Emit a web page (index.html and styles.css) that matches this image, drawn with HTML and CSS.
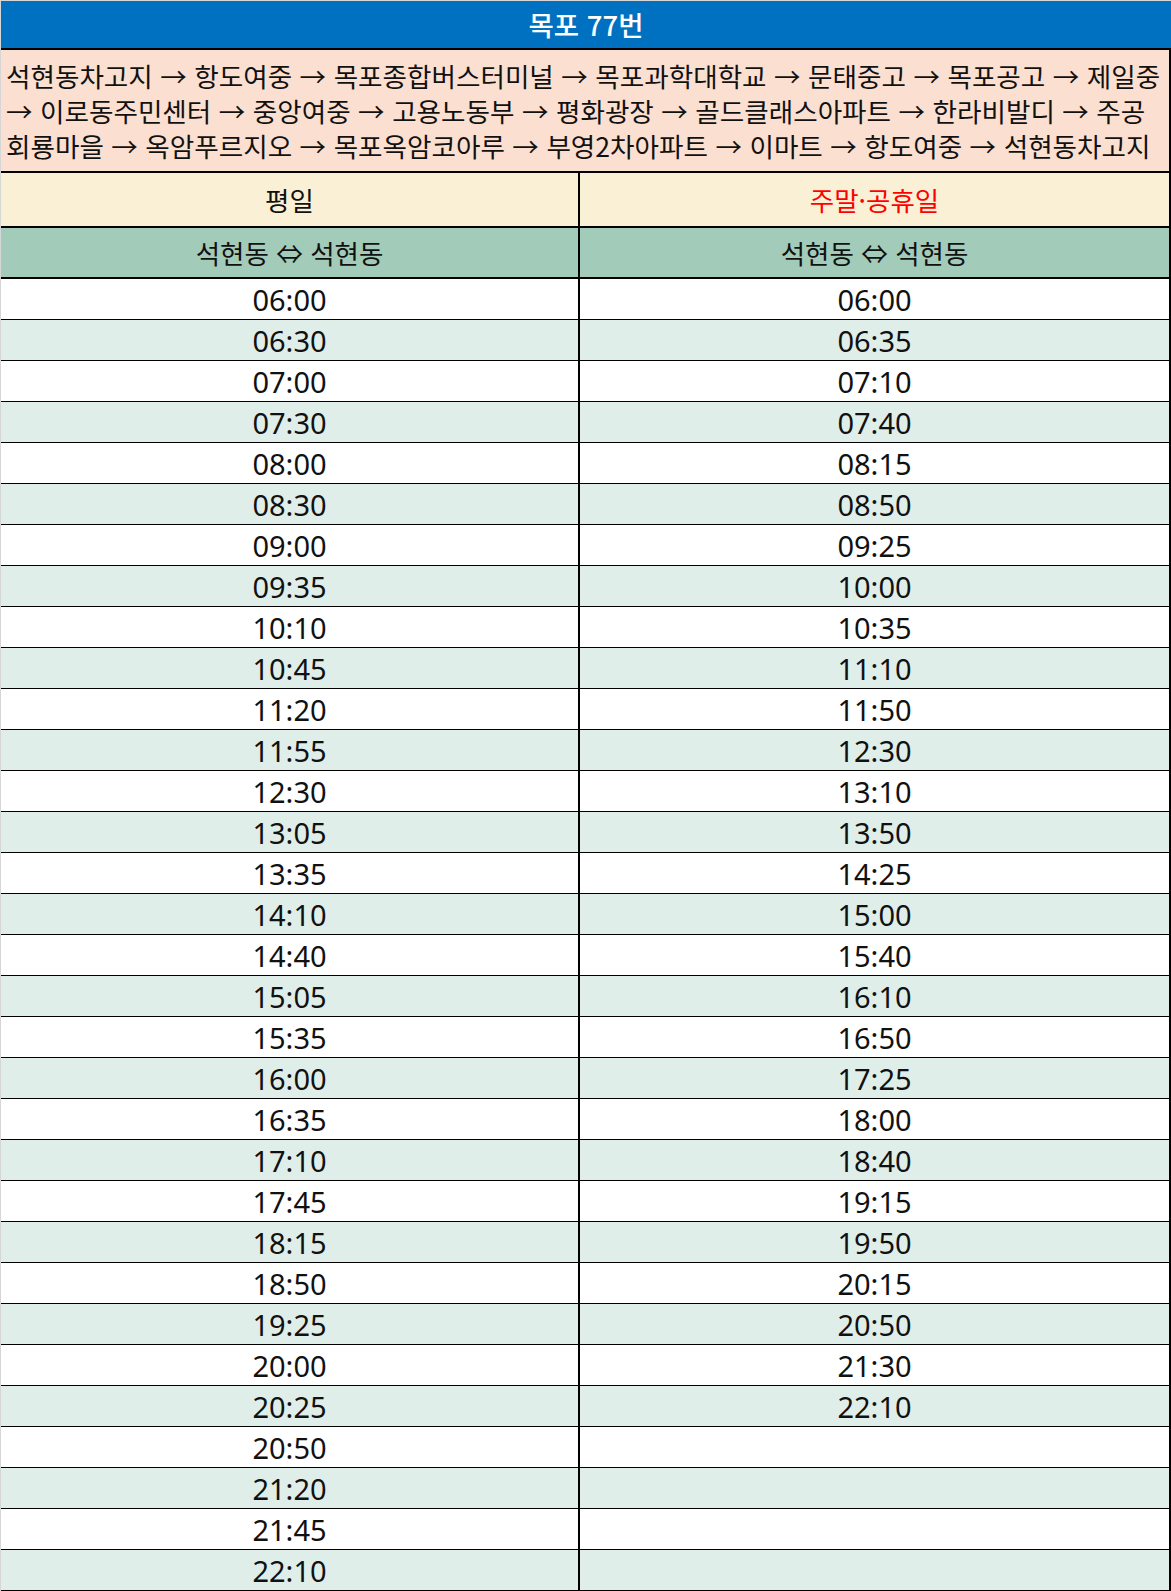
FILE: index.html
```html
<!DOCTYPE html>
<html lang="ko">
<head>
<meta charset="utf-8">
<title>목포 77번</title>
<link rel="stylesheet" href="styles.css">
</head>
<body>
<div class="sheet">
  <div class="title">목포 77번</div>
  <div class="route">석현동차고지 → 항도여중 → 목포종합버스터미널 → 목포과학대학교 → 문태중고 → 목포공고 → 제일중<br>→ 이로동주민센터 → 중앙여중 → 고용노동부 → 평화광장 → 골드클래스아파트 → 한라비발디 → 주공<br>회룡마을 → 옥암푸르지오 → 목포옥암코아루 → 부영2차아파트 → 이마트 → 항도여중 → 석현동차고지</div>
  <div class="row head">
    <div class="cell">평일</div>
    <div class="cell right red">주말·공휴일</div>
  </div>
  <div class="row sub">
    <div class="cell">석현동 ⇔ 석현동</div>
    <div class="cell right">석현동 ⇔ 석현동</div>
  </div>
  <div class="body">
    <div class="row"><div class="cell">06:00</div><div class="cell right">06:00</div></div>
    <div class="row"><div class="cell">06:30</div><div class="cell right">06:35</div></div>
    <div class="row"><div class="cell">07:00</div><div class="cell right">07:10</div></div>
    <div class="row"><div class="cell">07:30</div><div class="cell right">07:40</div></div>
    <div class="row"><div class="cell">08:00</div><div class="cell right">08:15</div></div>
    <div class="row"><div class="cell">08:30</div><div class="cell right">08:50</div></div>
    <div class="row"><div class="cell">09:00</div><div class="cell right">09:25</div></div>
    <div class="row"><div class="cell">09:35</div><div class="cell right">10:00</div></div>
    <div class="row"><div class="cell">10:10</div><div class="cell right">10:35</div></div>
    <div class="row"><div class="cell">10:45</div><div class="cell right">11:10</div></div>
    <div class="row"><div class="cell">11:20</div><div class="cell right">11:50</div></div>
    <div class="row"><div class="cell">11:55</div><div class="cell right">12:30</div></div>
    <div class="row"><div class="cell">12:30</div><div class="cell right">13:10</div></div>
    <div class="row"><div class="cell">13:05</div><div class="cell right">13:50</div></div>
    <div class="row"><div class="cell">13:35</div><div class="cell right">14:25</div></div>
    <div class="row"><div class="cell">14:10</div><div class="cell right">15:00</div></div>
    <div class="row"><div class="cell">14:40</div><div class="cell right">15:40</div></div>
    <div class="row"><div class="cell">15:05</div><div class="cell right">16:10</div></div>
    <div class="row"><div class="cell">15:35</div><div class="cell right">16:50</div></div>
    <div class="row"><div class="cell">16:00</div><div class="cell right">17:25</div></div>
    <div class="row"><div class="cell">16:35</div><div class="cell right">18:00</div></div>
    <div class="row"><div class="cell">17:10</div><div class="cell right">18:40</div></div>
    <div class="row"><div class="cell">17:45</div><div class="cell right">19:15</div></div>
    <div class="row"><div class="cell">18:15</div><div class="cell right">19:50</div></div>
    <div class="row"><div class="cell">18:50</div><div class="cell right">20:15</div></div>
    <div class="row"><div class="cell">19:25</div><div class="cell right">20:50</div></div>
    <div class="row"><div class="cell">20:00</div><div class="cell right">21:30</div></div>
    <div class="row"><div class="cell">20:25</div><div class="cell right">22:10</div></div>
    <div class="row"><div class="cell">20:50</div><div class="cell right"></div></div>
    <div class="row"><div class="cell">21:20</div><div class="cell right"></div></div>
    <div class="row"><div class="cell">21:45</div><div class="cell right"></div></div>
    <div class="row"><div class="cell">22:10</div><div class="cell right"></div></div>
  </div>
</div>
</body>
</html>
```
FILE: styles.css
```css
html, body {
  margin: 0;
  padding: 0;
}
body {
  background: #d6d6d6;
  font-family: "Noto Sans CJK KR", "Noto Sans", sans-serif;
  color: #111;
}
.sheet {
  margin: 1px 0 0 1px;
  width: 1170px;
}
.title {
  height: 47px;
  background: #0070c0;
  color: #fff;
  border-bottom: 2px solid #000;
  font-size: 27.5px;
  font-weight: 500;
  line-height: 47px;
  text-align: center;
}
.route {
  box-sizing: border-box;
  height: 123px;
  background: #fbdfd0;
  border-right: 2px solid #000;
  border-bottom: 2px solid #000;
  padding: 8px 0 0 5px;
  font-size: 26.6px;
  line-height: 35px;
  white-space: nowrap;
  overflow: hidden;
}
.row {
  display: grid;
  grid-template-columns: 577px 593px;
  height: 41px;
  border-bottom: 1px solid #000;
  box-sizing: border-box;
}
.cell {
  box-sizing: border-box;
  display: flex;
  align-items: center;
  justify-content: center;
  font-family: "Noto Sans", "Noto Sans CJK KR", sans-serif;
  font-size: 29px;
  background: #fff;
}
.cell.right {
  border-left: 2px solid #000;
  border-right: 2px solid #000;
}
.body .row:nth-child(even) .cell {
  background: #e0eeea;
}
.row.head {
  height: 55px;
  border-bottom-width: 2px;
}
.row.head .cell,
.row.sub .cell {
  font-family: "Noto Sans CJK KR", "Noto Sans", sans-serif;
  font-size: 26.5px;
}
.row.head .cell {
  background: #faf0d5;
}
.row.sub {
  height: 51px;
  border-bottom-width: 2px;
}
.row.sub .cell {
  background: #a3cbb9;
}
.red {
  color: #ff0000;
}
```
